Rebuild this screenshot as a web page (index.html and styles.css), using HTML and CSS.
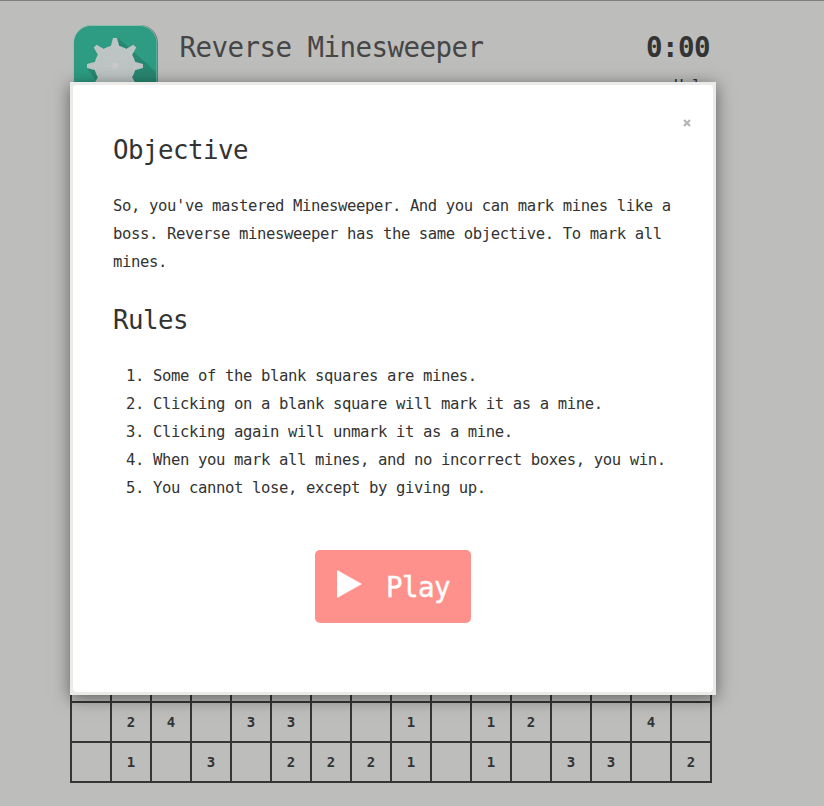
FILE: index.html
```html
<!DOCTYPE html>
<html lang="en">
<head>
<meta charset="utf-8">
<title>Reverse Minesweeper</title>
<link rel="stylesheet" href="styles.css">
</head>
<body>
<main class="page">
  <header class="header">
    <svg class="logo" viewBox="0 0 88 90">
      <defs><clipPath id="tile"><rect x="4" y="2" width="82" height="86" rx="17"/></clipPath></defs>
      <rect x="5" y="1" width="83" height="87" rx="18" fill="#777675"/>
      <rect x="3.500" y="1" width="83.500" height="87" rx="18" fill="#8abdb0"/>
      <rect x="4" y="2" width="82.500" height="86" rx="17" fill="#2d9c82"/>
      <path clip-path="url(#tile)" d="M48 14 L86 48 V90 H50 L17 44 Z" fill="#288771"/>
      <g fill="#bdc5c4">
        <path d="M43 14h4l3 11h-10z"/>
        <path d="M43 14h4l3 11h-10z" transform="rotate(45 45 42)"/>
        <path d="M43 14h4l3 11h-10z" transform="rotate(90 45 42)"/>
        <path d="M43 14h4l3 11h-10z" transform="rotate(135 45 42)"/>
        <path d="M43 14h4l3 11h-10z" transform="rotate(-45 45 42)"/>
        <path d="M43 14h4l3 11h-10z" transform="rotate(-90 45 42)"/>
        <path d="M43 14h4l3 11h-10z" transform="rotate(-135 45 42)"/>
        <circle cx="45" cy="42" r="20" stroke="#c4c8c7" stroke-width="1"/>
        <circle cx="45" cy="42" r="3.500" fill="#c8c8c8"/>
      </g>
    </svg>
    <h1 class="title">Reverse Minesweeper</h1>
    <div class="status">
      <div class="time">0:00</div>
      <a class="help">Help</a>
    </div>
  </header>
  <table class="board"><tbody id="rows"></tbody></table>
</main>
<section class="modal">
  <div class="panel">
    <button class="close" aria-label="Close"><svg viewBox="0 0 8 8"><path d="M1 1l6 6M7 1l-6 6"/></svg></button>
    <h2 class="heading">Objective</h2>
    <p class="text">So, you've mastered Minesweeper. And you can mark mines like a boss. Reverse minesweeper has the same objective. To mark all mines.</p>
    <h2 class="heading">Rules</h2>
    <ol class="rules">
      <li>Some of the blank squares are mines.</li>
      <li>Clicking on a blank square will mark it as a mine.</li>
      <li>Clicking again will unmark it as a mine.</li>
      <li>When you mark all mines, and no incorrect boxes, you win.</li>
      <li>You cannot lose, except by giving up.</li>
    </ol>
    <button class="play"><svg viewBox="0 0 25 28"><path d="M0 0l25 14-25 14z"/></svg><span>Play</span></button>
  </div>
</section>
<script src="board.js"></script>
</body>
</html>
```
FILE: styles.css
```css
* { box-sizing: border-box; }
body {
  margin: 0;
  height: 806px;
  overflow: hidden;
  border-top: 1px solid #7f7f7e;
  background: #bdbdbb;
  color: #333;
  font: 15.6px/28px "DejaVu Sans Mono", monospace;
  letter-spacing: -.392px;
}
.page { width: 642px; margin-left: 70px; }
.header { display: flex; height: 140px; padding-top: 23px; }
.logo { flex: none; width: 88px; height: 90px; }
.title {
  margin: 5px 0 0 21.5px;
  font-size: 27.5px;
  line-height: 36px;
  letter-spacing: -.556px;
  font-weight: 400;
  color: #464646;
}
.status { margin: 5px 2px 0 auto; text-align: right; }
.time { font-size: 27.5px; line-height: 36px; letter-spacing: -.556px; font-weight: 700; }
.help { display: block; margin-top: 7px; }
.board {
  width: 642px;
  border-collapse: collapse;
  table-layout: fixed;
}
.board td {
  height: 40px;
  padding: 0 0 1px;
  border: 2px solid #363636;
  text-align: center;
  font: 700 14px/20px "DejaVu Sans Mono", monospace;
  letter-spacing: 0;
}
.modal {
  position: absolute;
  left: 70px;
  top: 82px;
  width: 646px;
  height: 613px;
  padding: 3px;
  background: #ebebe9;
  box-shadow: 0 3px 16px rgba(0, 0, 0, .5);
}
.panel {
  height: 607px;
  padding: 45px 40px 0;
  border-radius: 4px;
  background: #fff;
}
.close {
  position: absolute;
  top: 37px;
  right: 25px;
  width: 8px;
  height: 8px;
  padding: 0;
  border: 0;
  background: none;
}
.close svg { display: block; fill: none; stroke: #b5b5b5; stroke-width: 2.2; }
.heading {
  margin: 0 0 22px;
  font-size: 25.8px;
  line-height: 40px;
  letter-spacing: -.53px;
  font-weight: 400;
}
.text { margin: 0 -10px 24px 0; }
.rules { margin: 0; padding-left: 40px; white-space: nowrap; }
.play {
  display: flex;
  align-items: center;
  width: 156px;
  height: 73px;
  margin: 48px auto 0;
  padding: 0 0 0 22px;
  border: 0;
  border-radius: 5px;
  background: #ff918d;
  color: #fff;
  font: 27.5px/36px "DejaVu Sans Mono", monospace;
  letter-spacing: -.556px;
  -webkit-text-stroke: .4px #fff;
}
.play svg { width: 25px; height: 28px; margin: 0 24px 5px 0; fill: #fff; }
```
FILE: board.js
```js
const hiddenRows = Array(14).fill(".".repeat(16));
const rows = [...hiddenRows, ".24.33..1.12..4.", ".1.3.2221.1.33.2"];
const body = document.getElementById("rows");
for (const row of rows) {
  const tr = body.insertRow();
  for (const cell of row) tr.insertCell().textContent = cell === "." ? "" : cell;
}
```
